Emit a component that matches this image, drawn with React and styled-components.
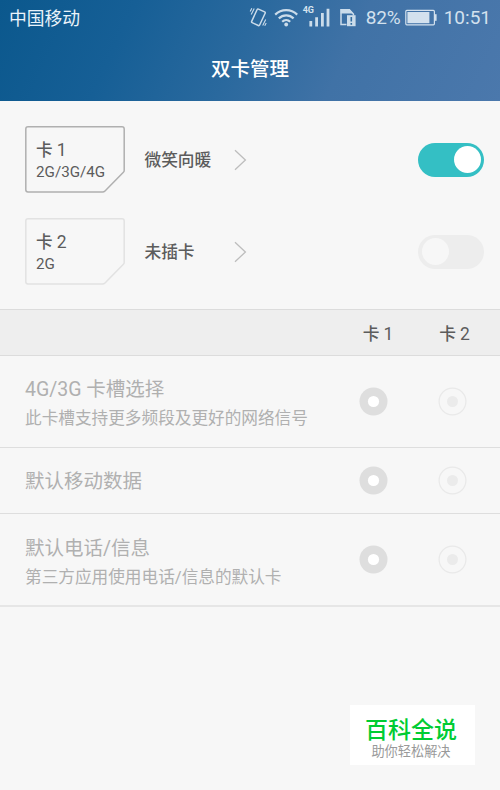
import React, { useState } from 'react';
import styled, { createGlobalStyle } from 'styled-components';

const GlobalStyle = createGlobalStyle`
  * {
    box-sizing: border-box;
  }
  body {
    margin: 0;
    background: #f7f7f7;
    font-family: Roboto, 'Noto Sans CJK SC', sans-serif;
  }
`;

const Screen = styled.div`
  position: relative;
  width: 500px;
  height: 790px;
  background: #f7f7f7;
  color: #5c5c5c;
  overflow: hidden;
`;

const Header = styled.header`
  height: 101px;
  background: linear-gradient(115deg, #0b588d 0%, #165f96 25%, #2a699e 48%, #4072a6 68%, #4b78ac 100%);
  color: #fff;
`;

const StatusBar = styled.div`
  display: flex;
  align-items: center;
  height: 36px;
  padding: 0 9px;
  color: #d3e1ee;
  font-size: 19px;
  line-height: 36px;
`;

const Carrier = styled.span`
  flex: 1;
  padding-top: 1px;
  color: #eaf3fa;
  font-size: 17.8px;
`;

const StatusIcons = styled.svg`
  flex: none;
  width: 112px;
  height: 36px;
  margin-right: 6px;
`;

const Percent = styled.span`
  width: 36px;
  letter-spacing: -0.1px;
`;

const Battery = styled.svg`
  flex: none;
  width: 32px;
  height: 18px;
  margin: 0 7px 0 3px;
`;

const Title = styled.h1`
  margin: 0;
  padding-top: 1px;
  font-size: 19.5px;
  font-weight: 500;
  line-height: 65px;
  text-align: center;
`;

const SimList = styled.section`
  padding: 12px 16px 12px 25px;
  height: 208px;
`;

const SimRow = styled.div`
  display: flex;
  align-items: center;
  height: 92px;
`;

const SimCard = styled.div`
  position: relative;
  flex: none;
  width: 100px;
  height: 67px;
  padding: 13px 0 0 11px;
`;

const CardOutline = styled.svg`
  position: absolute;
  top: 0;
  left: 0;
  width: 100px;
  height: 67px;
  fill: none;
  stroke: ${(props) => (props.$active ? '#b0b0b0' : '#e2e2e2')};
  stroke-width: 1.5;
`;

const CardName = styled.div`
  font-size: 16.6px;
  font-weight: 500;
  line-height: 22px;
`;

const Digit = styled.span`
  font-size: 17.5px;
  font-weight: 400;
`;

const CardBand = styled.div`
  font-size: 15.2px;
  line-height: 20px;
`;

const Operator = styled.div`
  width: 88px;
  margin-left: 19.5px;
  font-size: 16.7px;
  font-weight: 500;
`;

const Chevron = styled.svg`
  width: 14px;
  height: 22px;
  margin-top: 1px;
  fill: none;
  stroke: #bdbdbd;
  stroke-width: 1.3;
`;

const Switch = styled.button`
  width: 66px;
  height: 34px;
  margin: 1px 0 0 auto;
  padding: 3.5px;
  border: none;
  border-radius: 17px;
  background: ${(props) => (props.$on ? '#34bfc4' : '#ededed')};
  display: flex;
  justify-content: ${(props) => (props.$on ? 'flex-end' : 'flex-start')};
`;

const Knob = styled.span`
  width: 27px;
  height: 27px;
  border-radius: 50%;
  background: ${(props) => (props.$on ? '#fff' : '#f7f7f7')};
`;

const TableHead = styled.div`
  display: flex;
  align-items: center;
  height: 47px;
  padding: 3px 0 0 339px;
  border-top: 1px solid #dcdcdc;
  border-bottom: 1px solid #dcdcdc;
  background: #eee;
`;

const HeadCell = styled.div`
  width: 78px;
  text-align: center;
  font-size: 16.7px;
  font-weight: 500;
  line-height: 42px;

  & + & {
    width: 75px;
  }
`;

const OptionRow = styled.div`
  display: flex;
  align-items: center;
  height: ${(props) => (props.$tall ? '92px' : '66px')};
  padding-left: 25px;
  border-bottom: 1px solid #dedede;

  &:last-of-type {
    height: 93px;
    border-bottom: 2px solid #e6e6e6;
  }
`;

const OptionList = styled.section`
  display: flex;
  flex-direction: column;
`;

const OptionText = styled.div`
  flex: none;
  width: 334px;
  padding-top: ${(props) => (props.$tall ? '5px' : '2px')};
  color: #b0b0b0;

  ${OptionRow}:last-of-type & {
    padding-top: 7px;
  }
`;

const OptionTitle = styled.div`
  font-size: 19.5px;
  line-height: 28px;
`;

const OptionNote = styled.div`
  font-size: 16.65px;
  line-height: 29px;
`;

const Radio = styled.svg`
  flex: none;
  width: 29px;
  height: 29px;

  & + & {
    margin-left: 50px;
  }
`;

const Watermark = styled.div`
  position: absolute;
  left: 350px;
  top: 705px;
  width: 125px;
  height: 60px;
  padding-top: 12px;
  background: #fff;
  text-align: center;
`;

const WatermarkName = styled.div`
  color: #0c3;
  font-size: 23px;
  font-weight: 500;
  line-height: 27px;
  padding-right: 3px;
`;

const WatermarkNote = styled.div`
  color: #999;
  font-size: 13.2px;
  line-height: 16px;
  padding-right: 3px;
`;

const sims = [
  { slot: 1, band: '2G/3G/4G', operator: '微笑向暖', on: true },
  { slot: 2, band: '2G', operator: '未插卡', on: false },
];

const options = [
  { title: '4G/3G 卡槽选择', note: '此卡槽支持更多频段及更好的网络信号' },
  { title: '默认移动数据' },
  { title: '默认电话/信息', note: '第三方应用使用电话/信息的默认卡' },
];

const RadioMark = ({ checked }) => (
  <Radio viewBox="0 0 29 29">
    {checked ? (
      <>
        <circle cx="14.5" cy="14.5" r="14" fill="#dedede" />
        <circle cx="14.5" cy="14.5" r="5.6" fill="#fff" />
      </>
    ) : (
      <>
        <circle cx="14.5" cy="14.5" r="13.4" fill="none" stroke="#e9e9e9" strokeWidth="1.2" />
        <circle cx="14.5" cy="14.5" r="5.5" fill="#ebebeb" />
      </>
    )}
  </Radio>
);

const SignalIcons = () => (
  <StatusIcons viewBox="248 0 112 36" fill="none" stroke="#cbdcea">
    {/* vibrate */}
    <rect x="254" y="9.8" width="8.8" height="15" rx="1" strokeWidth="1.5" transform="rotate(25 258.4 17.3)" />
    <path d="M254.2 8.6l-3 6M251.8 8.2l-1.6 3.4M265.7 19.4l-3 6M266.2 23l-1.5 2.8" strokeWidth="1.1" />
    {/* wifi */}
    <path d="M275.2 14.6a16 16 0 0 1 22 0M278.8 18.4a10.5 10.5 0 0 1 14.8 0M282.2 21.8a5.8 5.8 0 0 1 8 0" strokeWidth="2.2" />
    <circle cx="286.2" cy="24.5" r="1.9" fill="#cbdcea" stroke="none" />
    <text x="302.7" y="13" fill="#d7e4ef" stroke="none" fontSize="9" fontWeight="700">4G</text>
    <path d="M310.8 21v5.4M316.6 17.3v9.1M322.4 13v13.4M328 8.8v17.6" strokeWidth="2.8" />
    {/* sim warning */}
    <path d="M346.5 24.6H341V9.8H349.3L353.4 14V15.4" strokeWidth="1.5" />
    <path d="M340.6 9h8.9l3.8 4.4H340.6z" fill="#cbdcea" stroke="none" />
    <path d="M347 15.2h8.6v11H347z" fill="#cbdcea" stroke="none" />
    <path d="M351.3 17v4.6M351.3 23v1.8" stroke="#336d9f" strokeWidth="1.6" />
  </StatusIcons>
);

const App = () => {
  const [enabled, setEnabled] = useState(sims.map((sim) => sim.on));

  const toggle = (index) => {
    setEnabled(enabled.map((on, i) => (i === index ? !on : on)));
  };

  return (
    <>
      <GlobalStyle />
      <Screen>
        <Header>
          <StatusBar>
            <Carrier>中国移动</Carrier>
            <SignalIcons />
            <Percent>82%</Percent>
            <Battery viewBox="0 0 32 18">
              <rect x="0.8" y="1.4" width="28.6" height="14.4" rx="1" fill="none" stroke="#d3e1ee" strokeWidth="1.2" />
              <rect x="2.4" y="3" width="22" height="11.2" fill="#d3e1ee" />
              <rect x="30" y="5.2" width="1.6" height="6.6" fill="#d3e1ee" />
            </Battery>
            <span>10:51</span>
          </StatusBar>
          <Title>双卡管理</Title>
        </Header>

        <SimList>
          {sims.map((sim, index) => (
            <SimRow key={sim.slot}>
              <SimCard>
                <CardOutline viewBox="0 0 100 67" $active={sim.on}>
                  <path d="M3 .8H97a2.2 2.2 0 0 1 2.2 2.2V44.5q0 1-.8 1.8L80 65q-1 1-2.4 1H3A2.2 2.2 0 0 1 .8 63.8V3A2.2 2.2 0 0 1 3 .8Z" />
                </CardOutline>
                <CardName>卡 <Digit>{sim.slot}</Digit></CardName>
                <CardBand>{sim.band}</CardBand>
              </SimCard>
              <Operator>{sim.operator}</Operator>
              <Chevron viewBox="0 0 14 22">
                <path d="M2 1.2L12.4 11L2 20.8" />
              </Chevron>
              <Switch $on={enabled[index]} onClick={() => toggle(index)}>
                <Knob $on={enabled[index]} />
              </Switch>
            </SimRow>
          ))}
        </SimList>

        <TableHead>
          {sims.map((sim) => (
            <HeadCell key={sim.slot}>卡 <Digit>{sim.slot}</Digit></HeadCell>
          ))}
        </TableHead>

        <OptionList>
          {options.map((option) => (
            <OptionRow key={option.title} $tall={!!option.note}>
              <OptionText $tall={!!option.note}>
                <OptionTitle>{option.title}</OptionTitle>
                {option.note && <OptionNote>{option.note}</OptionNote>}
              </OptionText>
              <RadioMark checked />
              <RadioMark />
            </OptionRow>
          ))}
        </OptionList>

        <Watermark>
          <WatermarkName>百科全说</WatermarkName>
          <WatermarkNote>助你轻松解决</WatermarkNote>
        </Watermark>
      </Screen>
    </>
  );
};

export default App;
